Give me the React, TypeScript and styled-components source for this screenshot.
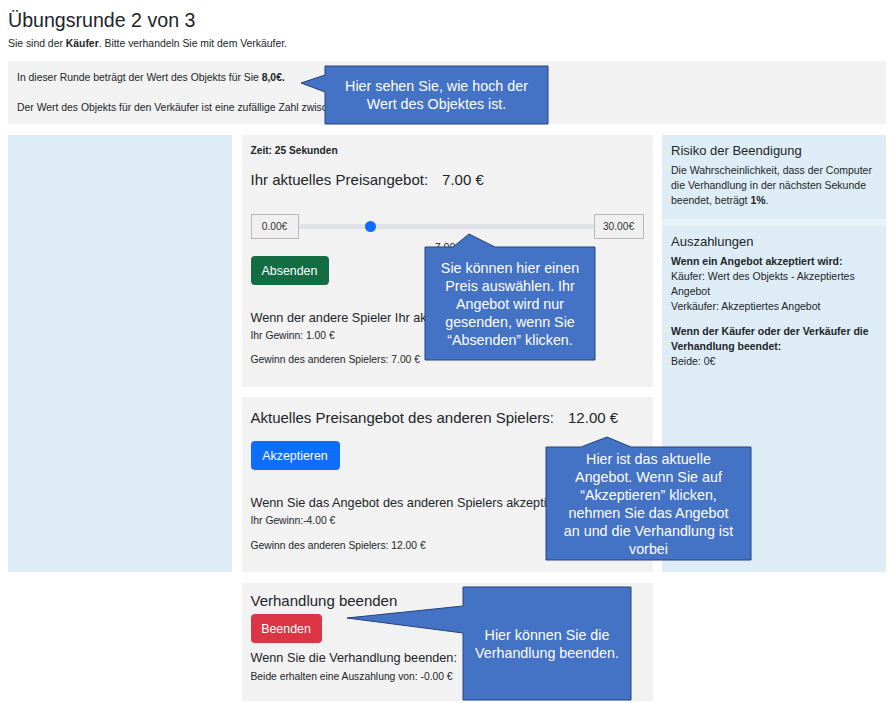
import React from "react";
import styled, { createGlobalStyle } from "styled-components";

const GlobalStyle = createGlobalStyle`
  html, body {
    margin: 0;
    padding: 0;
    background: #fff;
  }
  body {
    font-family: "Liberation Sans", Arial, sans-serif;
    color: #212529;
  }
  p { margin: 0; }
`;

const Page = styled.div`
  position: relative;
  padding: 6px 8px 0;
  width: 878px;
`;

const Title = styled.h1`
  margin: 0;
  font-size: 19.6px;
  line-height: 28px;
  font-weight: 400;
`;

const Small = styled.p<{ $mt?: number }>`
  font-size: 10.4px;
  line-height: 14px;
  margin-top: ${(p) => p.$mt ?? 0}px;
`;

const InfoBox = styled.div`
  margin-top: 10px;
  background: #f2f2f2;
  padding: 10px 9px 9px;
  display: flex;
  flex-direction: column;
  gap: 16px;
`;

const Row = styled.div`
  margin-top: 11px;
  display: grid;
  grid-template-columns: 224px 411px 224px;
  justify-content: space-between;
  align-items: start;
`;

const SidePanel = styled.div`
  background: #deedf5;
  height: 437px;
`;

const Middle = styled.div`
  display: flex;
  flex-direction: column;
`;

const Card = styled.div<{ $mt?: number; $pt?: number; $pb?: number }>`
  background: #f2f2f2;
  margin-top: ${(p) => p.$mt ?? 0}px;
  padding: ${(p) => p.$pt ?? 10}px 9px ${(p) => p.$pb ?? 20}px;
  display: flex;
  flex-direction: column;
  align-items: flex-start;
`;

const Timer = styled.p`
  font-size: 10.2px;
  line-height: 12px;
  font-weight: 700;
`;

const OfferHeading = styled.h5<{ $mt?: number }>`
  margin: ${(p) => p.$mt ?? 0}px 0 0;
  font-size: 15px;
  line-height: 18px;
  font-weight: 400;
  white-space: nowrap;
  display: flex;
  gap: 14px;
`;

const SliderRow = styled.div`
  margin-top: 25px;
  width: 100%;
  height: 25px;
  display: flex;
  align-items: stretch;
`;

const LimitBox = styled.div<{ $w: number }>`
  width: ${(p) => p.$w}px;
  box-sizing: border-box;
  border: 1px solid #b8b8b8;
  background: #f0f0f0;
  font-size: 10.2px;
  display: flex;
  align-items: center;
  justify-content: center;
  color: #333;
`;

const Track = styled.div`
  flex: 1;
  position: relative;
  display: flex;
  align-items: center;
  &::before {
    content: "";
    display: block;
    width: 100%;
    height: 5px;
    border-radius: 3px;
    background: #dee2e6;
  }
`;

const Thumb = styled.span`
  position: absolute;
  top: 50%;
  width: 11px;
  height: 11px;
  margin: -5.5px 0 0 -5.5px;
  border-radius: 50%;
  background: #0d6efd;
`;

const SliderValue = styled.p`
  align-self: stretch;
  text-align: center;
  font-size: 10.5px;
  line-height: 12px;
  margin-top: 2px;
  padding-right: 4px;
`;

const Button = styled.button<{ $bg: string; $mt: number; $w: number }>`
  margin-top: ${(p) => p.$mt}px;
  width: ${(p) => p.$w}px;
  height: 29px;
  border: none;
  border-radius: 4px;
  background: ${(p) => p.$bg};
  color: #fff;
  font-family: inherit;
  font-size: 12.4px;
  padding: 0;
`;

const Outcome = styled.h6<{ $mt: number }>`
  margin: ${(p) => p.$mt}px 0 0;
  font-size: 12.7px;
  line-height: 16px;
  font-weight: 400;
  white-space: nowrap;
`;

const Payout = styled.p<{ $mt: number }>`
  margin-top: ${(p) => p.$mt}px;
  font-size: 10.3px;
  line-height: 12px;
`;

const InfoColumn = styled.div`
  background: #e8f3f8;
  height: 437px;
  display: flex;
  flex-direction: column;
  gap: 7px;
`;

const InfoSection = styled.div<{ $grow?: boolean }>`
  background: #deedf5;
  padding: 8px 9px 11px;
  flex: ${(p) => (p.$grow ? 1 : "none")};
`;

const InfoHeading = styled.h5`
  margin: 0 0 4px;
  font-size: 13px;
  line-height: 16px;
  font-weight: 400;
`;

const InfoText = styled.p<{ $mt?: number }>`
  font-size: 10.5px;
  line-height: 15px;
  margin-top: ${(p) => p.$mt ?? 0}px;
`;

const CalloutBox = styled.div`
  position: absolute;
  display: flex;
  align-items: center;
  justify-content: center;
  text-align: center;
  color: #fff;
  font-family: "Liberation Sans", Arial, sans-serif;
  font-size: 14.3px;
  line-height: 18px;
  pointer-events: none;
  svg {
    position: absolute;
    left: 0;
    top: 0;
    overflow: visible;
  }
  span {
    position: relative;
  }
`;

type CalloutProps = {
  x: number;
  y: number;
  w: number;
  h: number;
  pointer: string;
  lines: string[];
};

function Callout({ x, y, w, h, pointer, lines }: CalloutProps) {
  return (
    <CalloutBox style={{ left: x, top: y, width: w, height: h }}>
      <svg width={w} height={h}>
        <polygon points={pointer} fill="#4472c4" stroke="#25427a" strokeWidth="1" />
      </svg>
      <span>
        {lines.map((l, i) => (
          <React.Fragment key={i}>
            {l}
            {i < lines.length - 1 && <br />}
          </React.Fragment>
        ))}
      </span>
    </CalloutBox>
  );
}

const MIN = 0;
const MAX = 30;
const offer = 7;
const TRACK_W = 297;

export default function App() {
  const thumbLeft = 5.5 + ((TRACK_W - 11) * (offer - MIN)) / (MAX - MIN);

  return (
    <>
      <GlobalStyle />
      <Page>
        <Title>Übungsrunde 2 von 3</Title>
        <Small $mt={3}>
          Sie sind der <b>Käufer</b>. Bitte verhandeln Sie mit dem Verkäufer.
        </Small>

        <InfoBox>
          <Small>
            In dieser Runde beträgt der Wert des Objekts für Sie <b>8,0€.</b>
          </Small>
          <Small>
            Der Wert des Objekts für den Verkäufer ist eine zufällige Zahl zwischen 0€ und 30€.
          </Small>
        </InfoBox>

        <Row>
          <SidePanel />

          <Middle>
            <Card $pb={21}>
              <Timer>Zeit: 25 Sekunden</Timer>
              <OfferHeading $mt={14}>
                <span>Ihr aktuelles Preisangebot:</span>
                <span>7.00 €</span>
              </OfferHeading>
              <SliderRow>
                <LimitBox $w={48}>0.00€</LimitBox>
                <Track>
                  <Thumb style={{ left: thumbLeft }} />
                </Track>
                <LimitBox $w={50}>30.00€</LimitBox>
              </SliderRow>
              <SliderValue>7.00</SliderValue>
              <Button $bg="#146c43" $mt={3} $w={78}>
                Absenden
              </Button>
              <Outcome $mt={25}>Wenn der andere Spieler Ihr aktuelles Angebot akzeptiert:</Outcome>
              <Payout $mt={4}>Ihr Gewinn: 1.00 €</Payout>
              <Payout $mt={12}>Gewinn des anderen Spielers: 7.00 €</Payout>
            </Card>

            <Card $mt={10} $pt={12}>
              <OfferHeading>
                <span>Aktuelles Preisangebot des anderen Spielers:</span>
                <span>12.00 €</span>
              </OfferHeading>
              <Button $bg="#0d6efd" $mt={14} $w={89}>
                Akzeptieren
              </Button>
              <Outcome $mt={25}>Wenn Sie das Angebot des anderen Spielers akzeptieren:</Outcome>
              <Payout $mt={4}>Ihr Gewinn:-4.00 €</Payout>
              <Payout $mt={13}>Gewinn des anderen Spielers: 12.00 €</Payout>
            </Card>

            <Card $mt={11} $pt={9} $pb={18}>
              <OfferHeading>Verhandlung beenden</OfferHeading>
              <Button $bg="#dc3545" $mt={4} $w={71}>
                Beenden
              </Button>
              <Outcome $mt={7}>Wenn Sie die Verhandlung beenden:</Outcome>
              <Payout $mt={5}>Beide erhalten eine Auszahlung von: -0.00 €</Payout>
            </Card>
          </Middle>

          <InfoColumn>
            <InfoSection>
              <InfoHeading>Risiko der Beendigung</InfoHeading>
              <InfoText>
                Die Wahrscheinlichkeit, dass der Computer die Verhandlung in der nächsten
                Sekunde beendet, beträgt <b>1%</b>.
              </InfoText>
            </InfoSection>
            <InfoSection $grow>
              <InfoHeading>Auszahlungen</InfoHeading>
              <InfoText>
                <b>Wenn ein Angebot akzeptiert wird:</b>
                <br />
                Käufer: Wert des Objekts - Akzeptiertes Angebot
                <br />
                Verkäufer: Akzeptiertes Angebot
              </InfoText>
              <InfoText $mt={10}>
                <b>Wenn der Käufer oder der Verkäufer die Verhandlung beendet:</b>
                <br />
                Beide: 0€
              </InfoText>
            </InfoSection>
          </InfoColumn>
        </Row>

        <Callout
          x={325}
          y={66}
          w={223}
          h={58}
          pointer="0,0 223,0 223,58 0,58 0,26 -24,17 0,9"
          lines={["Hier sehen Sie, wie hoch der", "Wert des Objektes ist."]}
        />
        <Callout
          x={425}
          y={247}
          w={170}
          h={113}
          pointer="0,0 28,0 44,-13 70,0 170,0 170,113 0,113"
          lines={[
            "Sie können hier einen",
            "Preis auswählen. Ihr",
            "Angebot wird nur",
            "gesenden, wenn Sie",
            "“Absenden” klicken.",
          ]}
        />
        <Callout
          x={546}
          y={447}
          w={205}
          h={113}
          pointer="0,0 35,0 61,-10 85,0 205,0 205,113 0,113"
          lines={[
            "Hier ist das aktuelle",
            "Angebot. Wenn Sie auf",
            "“Akzeptieren” klicken,",
            "nehmen Sie das Angebot",
            "an und die Verhandlung ist",
            "vorbei",
          ]}
        />
        <Callout
          x={463}
          y={587}
          w={168}
          h={113}
          pointer="0,0 168,0 168,113 0,113 0,46 -116,31 0,19"
          lines={["Hier können Sie die", "Verhandlung beenden."]}
        />
      </Page>
    </>
  );
}
